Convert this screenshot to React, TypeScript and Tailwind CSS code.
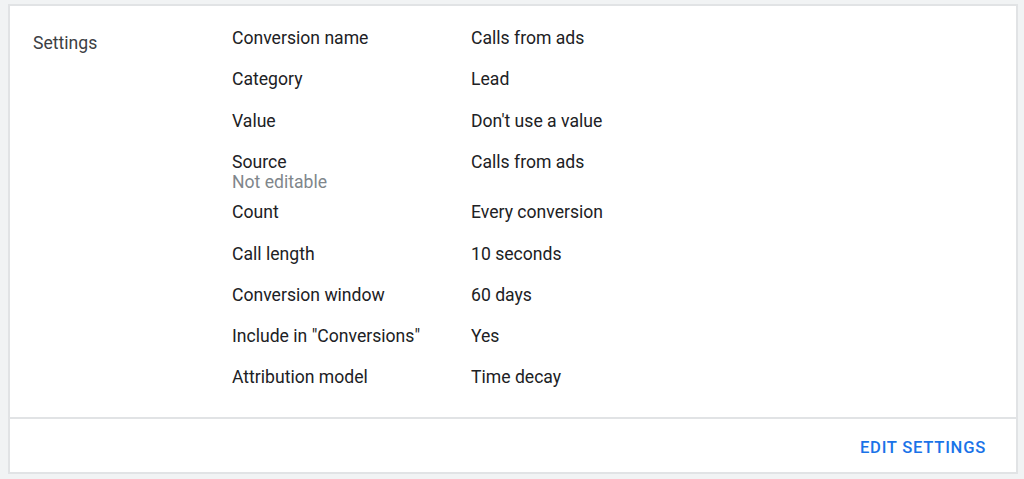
const rows: { label: string; value: string; note?: string }[] = [
  { label: "Conversion name", value: "Calls from ads" },
  { label: "Category", value: "Lead" },
  { label: "Value", value: "Don't use a value" },
  { label: "Source", value: "Calls from ads", note: "Not editable" },
  { label: "Count", value: "Every conversion" },
  { label: "Call length", value: "10 seconds" },
  { label: "Conversion window", value: "60 days" },
  { label: "Include in \"Conversions\"", value: "Yes" },
  { label: "Attribution model", value: "Time decay" },
];

export default function App() {
  return (
    <div className="h-[479px] w-[1024px] bg-[#f1f3f4] pl-[8px] pr-[6px] pt-[4px] font-['Roboto',sans-serif]">
      <div className="border-2 border-[#e1e3e5] bg-white">
        <div className="flex h-[413px] border-b-2 border-[#e1e3e5] pt-[21px]">
          <div className="mt-[5px] w-[222px] pl-[23px] text-[17.6px] leading-[22px] text-[#3c4043]">Settings</div>
          <div className="flex flex-col">
            {rows.map((row) => (
              <div key={row.label} className={row.note ? "flex h-[50.4px]" : "flex h-[41.3px]"}>
                <div className="w-[239px]">
                  <div className="text-[17.6px] leading-[22px] text-[#202124]">{row.label}</div>
                  {row.note && <div className="-mt-[1px] text-[17.6px] leading-[20px] text-[#80868b]">{row.note}</div>}
                </div>
                <div className="text-[17.6px] leading-[22px] text-[#202124]">{row.value}</div>
              </div>
            ))}
          </div>
        </div>
        <div className="flex h-[53px] items-center justify-end pr-[30px] pt-[5px]">
          <button className="text-[16.6px] font-medium tracking-[0.75px] text-[#1a73e8]">EDIT SETTINGS</button>
        </div>
      </div>
    </div>
  );
}
